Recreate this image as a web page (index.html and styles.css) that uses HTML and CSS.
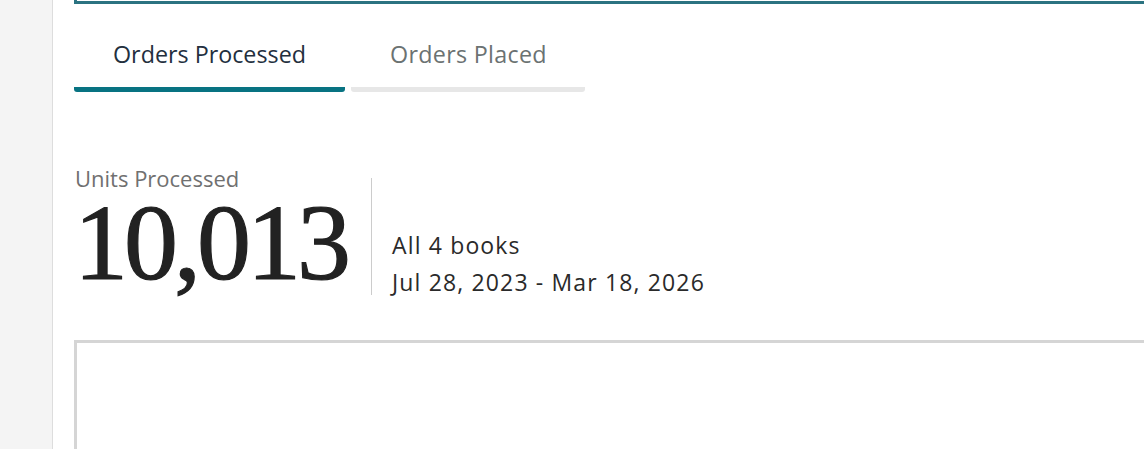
FILE: index.html
```html
<!DOCTYPE html>
<html>
<head>
<meta charset="utf-8">
<link rel="stylesheet" href="styles.css">
</head>
<body>
<div class="sidebar"></div>
<main class="main">
  <div class="top-box"></div>
  <div class="tabs">
    <div class="tab active">Orders Processed</div>
    <div class="tab">Orders Placed</div>
  </div>
  <section class="stats">
    <div class="metric">
      <div class="metric-label">Units Processed</div>
      <div class="metric-value">10,013</div>
    </div>
    <div class="divider"></div>
    <div class="meta">
      <div class="meta-line">All 4 books</div>
      <div class="meta-line">Jul 28, 2023 - Mar 18, 2026</div>
    </div>
  </section>
  <div class="chart-box"></div>
</main>
</body>
</html>
```

FILE: styles.css
```css
html, body {
  margin: 0;
  padding: 0;
  height: 100%;
  overflow: hidden;
  background: #ffffff;
}
body {
  display: flex;
  font-family: "Open Sans", "Noto Sans", sans-serif;
}
.sidebar {
  width: 52px;
  flex: none;
  background: #f4f4f4;
  border-right: 1px solid #dddddd;
}
.main {
  flex: 1;
  padding-left: 21px;
  min-width: 0;
  overflow: hidden;
}
.top-box {
  height: 1px;
  margin-right: -20px;
  border-left: 3px solid #2b7381;
  border-bottom: 3px solid #2b7381;
}
.tabs {
  display: flex;
  gap: 6px;
  margin-top: 35px;
}
.tab {
  padding: 0 39px 18px;
  font-size: 23.3px;
  line-height: 30px;
  color: #6b7272;
  border-bottom: 5px solid #e7e7e7;
  border-radius: 0 0 3px 3px;
}
.tab.active {
  color: #232f3e;
  border-bottom-color: #087382;
}
.tab:not(.active) {
  padding-right: 38px;
  letter-spacing: 0.3px;
}
.stats {
  display: flex;
  align-items: flex-start;
  margin-top: 72px;
}
.metric-label {
  font-size: 22px;
  line-height: 28px;
  color: #707070;
  margin-left: 1px;
}
.metric-value {
  font-family: "Liberation Serif", "Times New Roman", serif;
  font-size: 108px;
  line-height: 100px;
  letter-spacing: -4px;
  color: #222222;
  -webkit-text-stroke: 1.2px #222222;
  margin-top: 1px;
}
.divider {
  width: 1px;
  height: 117px;
  background: #cccccc;
  margin: 14px 20px 0 24px;
}
.meta {
  margin-top: 63px;
}
.meta-line {
  font-size: 23px;
  line-height: 37px;
  letter-spacing: 1.15px;
  color: #2a2a2a;
}
.chart-box {
  margin-top: 39px;
  height: 200px;
  margin-right: -20px;
  border-top: 3px solid #d5d5d5;
  border-left: 3px solid #d5d5d5;
}
```
